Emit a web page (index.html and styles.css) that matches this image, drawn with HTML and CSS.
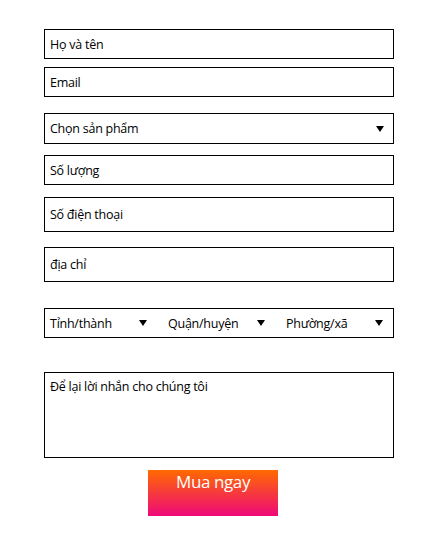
FILE: index.html
```html
<!DOCTYPE html>
<html lang="vi">
<head>
<meta charset="utf-8">
<title>Đặt hàng</title>
<link rel="stylesheet" href="styles.css">
</head>
<body>
<form class="order-form">
  <input class="field field-name" type="text" placeholder="Họ và tên">
  <input class="field field-email" type="email" placeholder="Email">
  <div class="field select select-product">
    <span class="select-label">Chọn sản phẩm</span>
    <span class="caret"></span>
  </div>
  <input class="field field-qty" type="text" placeholder="Số lượng">
  <input class="field field-tall field-phone" type="tel" placeholder="Số điện thoại">
  <input class="field field-tall field-address" type="text" placeholder="địa chỉ">
  <div class="field region-row">
    <div class="region-cell"><span class="select-label">Tỉnh/thành</span><span class="caret"></span></div>
    <div class="region-cell"><span class="select-label">Quận/huyện</span><span class="caret"></span></div>
    <div class="region-cell"><span class="select-label">Phường/xã</span><span class="caret"></span></div>
  </div>
  <textarea class="field message" placeholder="Để lại lời nhắn cho chúng tôi"></textarea>
  <div class="actions">
    <button class="buy-btn" type="button">Mua ngay</button>
  </div>
</form>
</body>
</html>
```

FILE: styles.css
```css
* {
  box-sizing: border-box;
}

html, body {
  margin: 0;
  padding: 0;
  background: #ffffff;
}

body {
  font-family: "Open Sans", "Noto Sans", sans-serif;
  font-size: 12.5px;
  letter-spacing: -0.25px;
  color: #000000;
}

.order-form {
  display: flex;
  flex-direction: column;
  width: 350px;
  margin: 29px 0 0 44px;
}

.field {
  display: block;
  width: 350px;
  height: 30px;
  margin: 0;
  padding: 0 5px;
  border: 1px solid #000000;
  border-radius: 0;
  background: #ffffff;
  font-family: inherit;
  font-size: 12.5px;
  letter-spacing: -0.25px;
  color: #000000;
  outline: none;
}

.field::placeholder {
  color: #000000;
  opacity: 1;
}

.field-email { margin-top: 8px; }
.select-product { margin-top: 16px; height: 31px; }
.field-qty { margin-top: 11px; }
.field-phone { margin-top: 12px; }
.field-address { margin-top: 15px; }
.field-tall { height: 35px; }

.select {
  display: flex;
  align-items: center;
  justify-content: space-between;
  padding: 0 9px 0 5px;
}

.caret {
  display: block;
  width: 0;
  height: 0;
  border-left: 4px solid transparent;
  border-right: 4px solid transparent;
  border-top: 6px solid #000000;
}

.region-row {
  margin-top: 26px;
  display: grid;
  grid-template-columns: repeat(3, 118px);
  padding: 0;
  overflow: hidden;
}

.region-cell {
  display: flex;
  align-items: center;
  justify-content: space-between;
  padding: 0 16px 0 5px;
}

.message {
  margin-top: 34px;
  height: 86px;
  padding: 5px 5px;
  resize: none;
  line-height: normal;
}

.actions {
  display: flex;
  justify-content: flex-start;
  padding-left: 104px;
  margin-top: 12px;
}

.buy-btn {
  width: 130px;
  height: 46px;
  padding: 0;
  border: 0;
  border-radius: 0;
  background: linear-gradient(180deg, #ff6a00 0%, #ee0979 100%);
  color: #ffffff;
  font-family: inherit;
  font-size: 17px;
  letter-spacing: -0.4px;
  line-height: normal;
  display: flex;
  justify-content: center;
  align-items: flex-start;
  cursor: pointer;
}
```
